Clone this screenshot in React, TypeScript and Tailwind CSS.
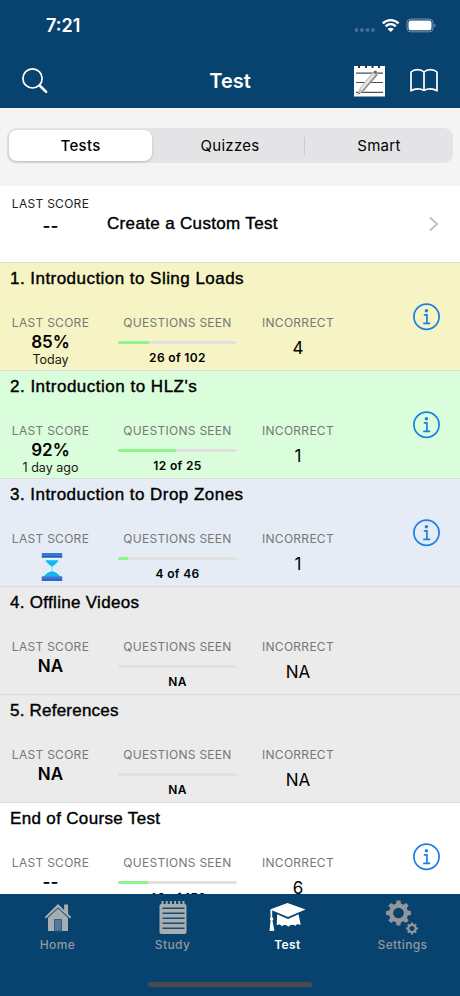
import React from "react";

type Row = {
  title: string;
  tracking: string;
  bg: string;
  score: string;
  when?: string;
  seen: string;
  progress: number;
  incorrect: string;
  info: boolean;
  pending?: boolean;
};

const rows: Row[] = [
  { title: "1. Introduction to Sling Loads", tracking: "tracking-[0.46px]", bg: "bg-[#f6f4c4]", score: "85%", when: "Today", seen: "26 of 102", progress: 26, incorrect: "4", info: true },
  { title: "2. Introduction to HLZ's", tracking: "tracking-[0.5px]", bg: "bg-[#dafedb]", score: "92%", when: "1 day ago", seen: "12 of 25", progress: 48.5, incorrect: "1", info: true },
  { title: "3. Introduction to Drop Zones", tracking: "tracking-[0.46px]", bg: "bg-[#e5ecf5]", score: "", seen: "4 of 46", progress: 8.7, incorrect: "1", info: true, pending: true },
  { title: "4. Offline Videos", tracking: "tracking-[0.3px]", bg: "bg-[#ebebeb]", score: "NA", seen: "NA", progress: 0, incorrect: "NA", info: false },
  { title: "5. References", tracking: "tracking-[0.22px]", bg: "bg-[#ebebeb]", score: "NA", seen: "NA", progress: 0, incorrect: "NA", info: false },
  { title: "End of Course Test", tracking: "tracking-[0.34px]", bg: "bg-white", score: "--", seen: "40 of 153", progress: 25.5, incorrect: "6", info: true },
];

const titleClass =
  "whitespace-nowrap font-['Liberation_Sans',sans-serif] text-[17px] leading-[20px] text-black [-webkit-text-stroke:0.4px_black]";
const labelClass = "whitespace-nowrap text-[12px] leading-[16px] tracking-[0.28px]";

function InfoIcon() {
  return (
    <svg className="mt-[40px] ml-[75px] h-[28px] w-[28px] shrink-0" viewBox="0 0 28 28" fill="none" stroke="#1b7fe6">
      <circle cx="13.5" cy="13.7" r="12.6" strokeWidth="1.7" />
      <circle cx="13.4" cy="7.700" r="1.7" fill="#1b7fe6" stroke="none" />
      <path d="M10.8 11.900h3.1v8.2M10.2 20.300h7" strokeWidth="1.7" />
    </svg>
  );
}

function Hourglass() {
  return (
    <svg className="mt-[5px] h-[30px] w-[22px] translate-x-[1px]" viewBox="0 0 22 30">
      <path d="M2.5 5.500h17c-.3 4.500-3 6.500-6.800 9.500 3.800 3 6.500 5 6.800 9.500h-17c.3-4.500 3-6.500 6.800-9.500-3.800-3-6.500-5-6.800-9.500Z" fill="#e3f6ff" stroke="#b8dff5" strokeWidth=".5" />
      <path d="M4.500 8.300h13c-.9 2.700-3.700 4.200-6.500 6.700-2.800-2.500-5.600-4-6.500-6.700Z" fill="#17b5ed" />
      <path d="M11 15v5" stroke="#77cef2" strokeWidth="1" />
      <path d="M3 24.500c2-3.600 5-5 8-5s6 1.400 8 5Z" fill="#17b5ed" />
      <path d="M.8 1h20.400v4.500H.8zM.8 24.300h20.400v4.500H.8z" fill="#3478d3" />
      <path d="M.8 4h20.400v1.500H.8zM.8 27.300h20.400v1.500H.8z" fill="#2460bb" />
    </svg>
  );
}

function TestRow({ row }: { row: Row }) {
  return (
    <div className={`flex h-[108px] shrink-0 border-t border-[#d9dcd9] ${row.bg}`}>
      <div className="w-[338px] shrink-0">
        <div className={`mt-[6px] ml-[10px] ${titleClass} ${row.tracking}`}>{row.title}</div>
        <div className="mt-[26px] flex text-[#777776]">
          <div className="flex w-[101px] flex-col items-center">
            <span className={labelClass}>LAST SCORE</span>
            {row.pending ? (
              <Hourglass />
            ) : (
              <span className="mt-[1px] text-[17px] leading-[20px] font-semibold text-black">{row.score}</span>
            )}
            {row.when && <span className="text-[12.500px] leading-[15px] whitespace-nowrap text-[#181816]">{row.when}</span>}
          </div>
          <div className="ml-[17px] flex w-[119px] flex-col items-center">
            <span className={labelClass}>QUESTIONS SEEN</span>
            <div className="mt-[10px] h-[3px] w-full rounded-full bg-[#e2e1e0]">
              <div className="h-[3px] rounded-l-full bg-[#91f38d]" style={{ width: `${row.progress}%` }} />
            </div>
            <span className="mt-[6px] text-[12px] leading-[16px] font-semibold tracking-[0.35px] text-black">{row.seen}</span>
          </div>
          <div className="ml-[21px] flex w-[80px] flex-col items-center">
            <span className={labelClass}>INCORRECT</span>
            <span className="mt-[7px] text-[17px] leading-[20px] text-black">{row.incorrect}</span>
          </div>
        </div>
      </div>
      {row.info && <InfoIcon />}
    </div>
  );
}

function StatusBar() {
  return (
    <div className="flex h-[54px] items-start">
      <span className="mt-[15px] ml-[46px] w-[60px] text-[18px] leading-[22px] font-semibold">7:21</span>
      <svg className="mt-[16px] ml-[247px] h-[18px] w-[84px]" viewBox="353 16 84 18" fill="none">
        <g fill="#436e96">
          <circle cx="356.500" cy="30" r="2" />
          <circle cx="362" cy="30" r="2" />
          <circle cx="367.500" cy="30" r="2" />
          <circle cx="373" cy="30" r="2" />
        </g>
        <path d="M382.800 23.300c4.500-4.300 11.300-4.300 15.800 0M385.600 26.400c3-2.800 7.200-2.800 10.200 0" stroke="white" strokeWidth="2.400" />
        <path d="m387.600 28.900 3.100 3.100 3.100-3.100c-1.700-1.500-4.500-1.500-6.200 0Z" fill="white" />
        <rect x="407" y="19" width="26" height="12.800" rx="3.800" stroke="#7895ae" />
        <rect x="408.500" y="20.500" width="23" height="9.800" rx="2.300" fill="white" />
        <path d="M434.300 23.400c1.500.6 1.500 3.300 0 4Z" fill="#7895ae" />
      </svg>
    </div>
  );
}

function Header() {
  return (
    <header className="h-[108px] shrink-0 bg-[#08426f] text-white">
      <StatusBar />
      <div className="flex h-[54px] items-center">
        <svg className="ml-[21px] h-[28px] w-[28px]" viewBox="0 0 28 28" fill="none" stroke="white" strokeLinecap="round">
          <circle cx="11.500" cy="11.400" r="9.600" strokeWidth="1.700" />
          <path d="m18.600 18.500 6.500 6.400" strokeWidth="2.600" />
        </svg>
        <h1 className="ml-[131px] w-[100px] text-center text-[20px] leading-[26px] font-semibold">Test</h1>
        <svg className="ml-[74px] h-[32px] w-[31px]" viewBox="0 0 31 32">
          <path d="M0 1h31v30.500H0z" fill="white" />
          <path d="M5 0v3M12 0v3M18.500 0v3M25 0v3" stroke="#263647" strokeWidth="2" />
          <path d="M2 8.200h27M2 17.500h27M2 27.300h27" stroke="#4b5054" strokeWidth="1.200" />
          <path d="m3.500 29.500 2.100-6.200L19 6.800c1.500-1.600 5.800.7 4.700 3L9.500 26.200Z" fill="#c3c3c1" />
          <path d="m6.500 23.700 13-15.500 2 1.100L8.400 25.300Z" fill="#e7e7e5" />
          <path d="m8.700 26 14.600-16.800M3.800 29.200l2.400-1.500" stroke="#8c8c8b" strokeWidth="1.300" />
          <circle cx="21.300" cy="7.300" r="1.800" fill="#747474" />
        </svg>
        <svg className="ml-[24px] h-[28px] w-[30px]" viewBox="0 0 30 28" fill="none" stroke="white" strokeWidth="1.700" strokeLinejoin="round" strokeLinecap="round">
          <path d="M15 5v18.500M15 5C11.800 1.800 5.500 1.700 2 5v18.800c4-2.500 9.600-2.400 13-.3 3.400-2.100 9-2.200 13 .3V5C24.500 1.700 18.200 1.800 15 5Z" />
        </svg>
      </div>
    </header>
  );
}

function HomeIcon() {
  return (
    <svg className="h-[36px] w-[36px]" viewBox="0 0 36 36" fill="#a8adb0">
      <path d="M18 4 4.800 17.100 6 18.400 18 7.400l12.100 11 1.200-1.300-3.200-3.200V4.500h-4v5.400Z" />
      <path d="M18 8.500 8 17.700V31h20V17.700Z" />
      <path d="M14.500 19.500h7V31h-7Z" fill="#527a9a" stroke="#315e82" />
    </svg>
  );
}

function StudyIcon() {
  return (
    <svg className="h-[36px] w-[36px]" viewBox="0 0 36 36">
      <rect x="4.500" y="4" width="27" height="30" rx="2" fill="#a8adb0" />
      <path d="M7.500 1v5M11.700 1v5M15.900 1v5M20.100 1v5M24.300 1v5M28.500 1v5" stroke="#a8adb0" strokeWidth="2" />
      <path d="M7.500 8.300h22M7.500 13.200h22M7.500 18.200h22M7.500 23.200h22M7.500 28.200h22" stroke="#174b72" strokeWidth="1.500" />
    </svg>
  );
}

function CapIcon() {
  return (
    <svg className="h-[36px] w-[38px]" viewBox="1 1 38 36" fill="white">
      <path d="M19.500 4 37.500 10.400 20 18 2 10.500Z" />
      <path d="M9.200 15.300 20 20.100l10.500-4.900 2.300 11.100c-2-1.500-4-1.400-5.400.4-2.800-1.700-5.300-1.100-7 1.100-2-2.100-4.200-2.500-6.500-.6-1.400-1.800-3-2.200-5.200-1Z" />
      <path d="M2.300 11h1.900v9.200l2.200 11.500-4.900.2 1.200-11.700Z" />
      <circle cx="3.600" cy="20" r="1.800" />
    </svg>
  );
}

const cogAngles = [0, 45, 90, 135, 180, 225, 270, 315];

function Cog({ x, y, scale }: { x: number; y: number; scale: number }) {
  return (
    <g transform={`translate(${x} ${y}) scale(${scale})`}>
      <circle r="7.500" fill="none" stroke="#929699" strokeWidth="4.300" />
      {cogAngles.map((a) => (
        <path key={a} d="M-2.600-8.500-1.900-12.400H1.900L2.600-8.500Z" fill="#929699" transform={`rotate(${a})`} />
      ))}
    </g>
  );
}

function SettingsIcon() {
  return (
    <svg className="h-[36px] w-[36px]" viewBox="0 0 36 36">
      <Cog x={13.500} y={13} scale={1} />
      <Cog x={27} y={28.500} scale={0.48} />
    </svg>
  );
}

function TabBar() {
  const tabs = [
    { label: "Home", icon: <HomeIcon /> },
    { label: "Study", icon: <StudyIcon /> },
    { label: "Test", icon: <CapIcon />, active: true },
    { label: "Settings", icon: <SettingsIcon /> },
  ];
  return (
    <nav className="flex h-[102px] shrink-0 flex-col items-center bg-[#08426f]">
      <div className="grid h-[88px] w-full grid-cols-4 pt-[6px]">
        {tabs.map((t) => (
          <div key={t.label} className="flex flex-col items-center">
            {t.icon}
            <span className={`mt-[1px] text-[12px] leading-[16px] tracking-[0.4px] ${t.active ? "font-semibold text-white" : "font-medium text-[#9298a0]"}`}>
              {t.label}
            </span>
          </div>
        ))}
      </div>
      <div className="h-[5px] w-[164px] rounded-full bg-[#4b4b4d]" />
    </nav>
  );
}

export default function App() {
  return (
    <div className="flex h-[996px] w-[460px] flex-col overflow-hidden bg-white font-['Inter',sans-serif]">
      <Header />
      <div className="h-[78px] shrink-0 bg-[#f4f4f4] px-[7px] pt-[20px]">
        <div className="flex h-[35px] items-center rounded-[9px] bg-[#e4e4e6] text-[15px] leading-[20px] text-black">
          <div className="ml-[2px] flex h-[31px] w-[143px] items-center justify-center rounded-[8px] bg-white font-medium tracking-[0.3px] shadow-[0_1px_3px_rgba(0,0,0,0.18)]">Tests</div>
          <div className="flex-1 pl-[4px] text-center tracking-[0.3px]">Quizzes</div>
          <div className="h-[18px] w-px bg-[#cbcbce]" />
          <div className="w-[148px] text-center tracking-[0.3px]">Smart</div>
        </div>
      </div>
      <main className="flex min-h-0 flex-1 flex-col overflow-hidden">
        <div className="flex h-[76px] shrink-0 bg-white">
          <div className="flex w-[101px] flex-col items-center pt-[10px]">
            <span className={`${labelClass} text-[#222]`}>LAST SCORE</span>
            <span className="mt-[4px] text-[17px] leading-[20px] font-semibold">--</span>
          </div>
          <div className={`mt-[28px] ml-[6px] tracking-[0.34px] ${titleClass}`}>Create a Custom Test</div>
          <svg className="mt-[29px] mr-[20px] ml-auto h-[18px] w-[12px]" viewBox="0 0 12 18" fill="none" stroke="#c2c2c4" strokeWidth="2">
            <path d="m2 2.500 7 6.500-7 6.500" />
          </svg>
        </div>
        {rows.map((r) => (
          <TestRow key={r.title} row={r} />
        ))}
      </main>
      <TabBar />
    </div>
  );
}
